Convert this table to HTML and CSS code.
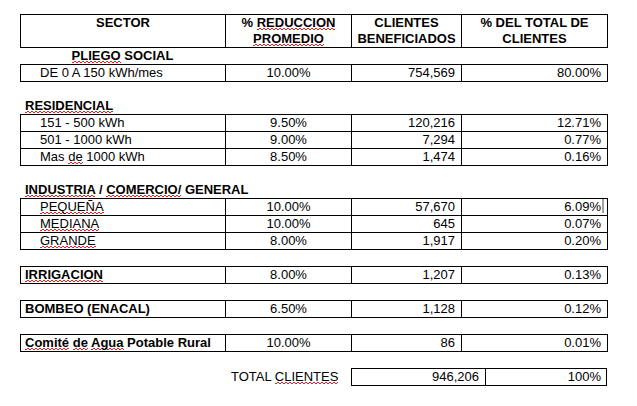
FILE: index.html
```html
<!DOCTYPE html>
<html lang="es">
<head>
<meta charset="utf-8">
<title>Reducción por sector</title>
<link rel="stylesheet" href="styles.css">
</head>
<body>
<div class="sheet">
  <div class="box">
    <div class="row head">
      <div class="c">SECTOR</div>
      <div class="c">% <span class="sp">REDUCCION</span><br><span class="sp">PROMEDIO</span></div>
      <div class="c">CLIENTES<br>BENEFICIADOS</div>
      <div class="c">% DEL TOTAL DE<br>CLIENTES</div>
    </div>
  </div>
  <div class="label center"><span class="sp">PLIEGO</span> SOCIAL</div>
  <div class="box">
    <div class="row"><div class="c ind">DE 0 A 150 kWh/mes</div><div class="c mid">10.00%</div><div class="c num">754,569</div><div class="c num">80.00%</div></div>
  </div>

  <div class="gap"></div>
  <div class="label"><span class="sp">RESIDENCIAL</span></div>
  <div class="box">
    <div class="row"><div class="c ind">151 - 500 kWh</div><div class="c mid">9.50%</div><div class="c num">120,216</div><div class="c num">12.71%</div></div>
    <div class="row"><div class="c ind">501 - 1000 kWh</div><div class="c mid">9.00%</div><div class="c num">7,294</div><div class="c num">0.77%</div></div>
    <div class="row"><div class="c ind">Mas <span class="sp">de</span> 1000 kWh</div><div class="c mid">8.50%</div><div class="c num">1,474</div><div class="c num">0.16%</div></div>
  </div>

  <div class="gap"></div>
  <div class="label"><span class="sp">INDUSTRIA</span> / <span class="sp">COMERCIO/</span> GENERAL</div>
  <div class="box">
    <div class="row"><div class="c ind"><span class="sp">PEQUEÑA</span></div><div class="c mid">10.00%</div><div class="c num">57,670</div><div class="c num sel">6.09%<span class="cursor"></span></div></div>
    <div class="row"><div class="c ind"><span class="sp">MEDIANA</span></div><div class="c mid">10.00%</div><div class="c num">645</div><div class="c num">0.07%</div></div>
    <div class="row"><div class="c ind"><span class="sp">GRANDE</span></div><div class="c mid">8.00%</div><div class="c num">1,917</div><div class="c num">0.20%</div></div>
  </div>

  <div class="gap"></div>
  <div class="box">
    <div class="row"><div class="c bold"><span class="sp">IRRIGACION</span></div><div class="c mid">8.00%</div><div class="c num">1,207</div><div class="c num">0.13%</div></div>
  </div>

  <div class="gap"></div>
  <div class="box">
    <div class="row"><div class="c bold">BOMBEO (ENACAL)</div><div class="c mid">6.50%</div><div class="c num">1,128</div><div class="c num">0.12%</div></div>
  </div>

  <div class="gap"></div>
  <div class="box">
    <div class="row"><div class="c bold"><span class="sp">Comité</span> <span class="sp">de</span> <span class="sp">Agua</span> Potable Rural</div><div class="c mid">10.00%</div><div class="c num">86</div><div class="c num">0.01%</div></div>
  </div>

  <div class="gap"></div>
  <div class="total">
    <div class="spacer"></div>
    <div class="total-label">TOTAL <span class="sp">CLIENTES</span></div>
    <div class="tbox">
      <div class="c num">946,206</div>
      <div class="c num">100%</div>
    </div>
  </div>
</div>
</body>
</html>
```

FILE: styles.css
```css
html, body {
  margin: 0;
  padding: 0;
  background: #ffffff;
}

body {
  font-family: "Liberation Sans", Arial, sans-serif;
  font-size: 13px;
  line-height: 16px;
  color: #000000;
}

.sheet {
  padding: 14px 0 0 20px;
}

.box {
  width: 588px;
  box-sizing: border-box;
  border-right: 1px solid #000;
  border-bottom: 1px solid #000;
}

.row {
  display: grid;
  grid-template-columns: 205px 126px 110px 146px;
  height: 17px;
}

.row.head {
  height: 33px;
  font-weight: bold;
  text-align: center;
}

.c {
  box-sizing: border-box;
  border-left: 1px solid #000;
  border-top: 1px solid #000;
  white-space: nowrap;
}

.ind {
  padding-left: 19px;
}

.bold {
  font-weight: bold;
  padding-left: 4px;
}

.mid {
  text-align: center;
}

.num {
  text-align: right;
  padding-right: 6px;
}

.sel {
  padding-right: 3px;
}

.cursor {
  display: inline-block;
  width: 2px;
  height: 14px;
  margin-left: 1px;
  vertical-align: top;
  background: #a3a3a3;
}

.label {
  height: 16px;
  font-weight: bold;
  padding-left: 5px;
}

.label.center {
  width: 205px;
  padding-left: 0;
  text-align: center;
}

.gap {
  height: 16px;
}

.sp {
  background-image:
    linear-gradient(135deg, transparent 40%, #e42222 40%, #e42222 60%, transparent 60%),
    linear-gradient(45deg, transparent 40%, #e42222 40%, #e42222 60%, transparent 60%);
  background-size: 4px 2px, 4px 2px;
  background-position: 0 100%, 2px 100%;
  background-repeat: repeat-x;
}

.total {
  display: grid;
  grid-template-columns: 205px 126px 256px;
}

.total-label {
  padding: 1px 0 0 6px;
  white-space: nowrap;
}

.tbox {
  display: grid;
  grid-template-columns: 134px 122px;
  height: 18px;
  box-sizing: border-box;
  border-right: 1px solid #000;
  border-bottom: 1px solid #000;
}
```
